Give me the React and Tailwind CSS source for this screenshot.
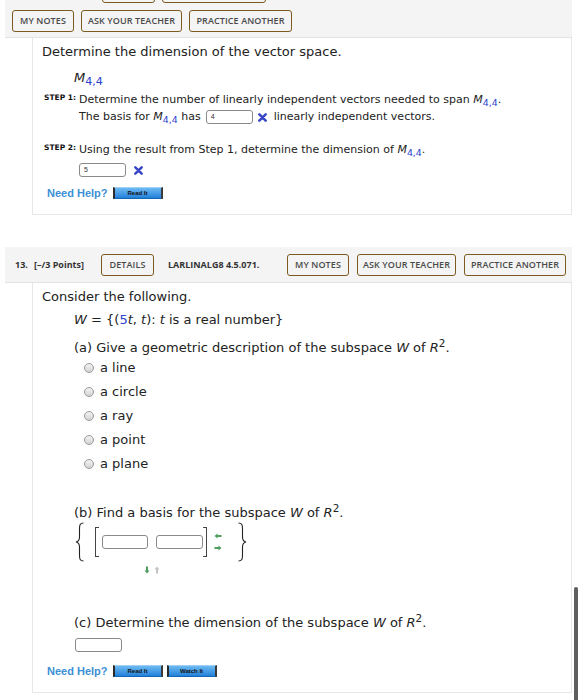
import React from "react";

const Btn = ({ className = "", children }) => (
  <div
    className={
      "h-[22px] flex items-center justify-center rounded-[3px] border-[1.5px] border-[#7d5a1e] text-[9px] font-semibold text-[#4a4a4a] tracking-[0.1px] " +
      className
    }
    style={{ fontFamily: '"Open Sans", sans-serif' }}
  >
    {children}
  </div>
);

const Sub = ({ children }) => (
  <span className="text-[#2b3fcf] text-[0.85em] relative top-[3px]">{children}</span>
);

const M44 = () => (
  <span>
    <i>M</i>
    <Sub>4,4</Sub>
  </span>
);

const R2 = () => (
  <span>
    <i>R</i>
    <span className="text-[0.8em] relative top-[-5px]">2</span>
  </span>
);

const BlueX = () => (
  <svg width="9" height="9" viewBox="0 0 10 10" className="inline-block">
    <path d="M1.5 1.5 L8.5 8.5 M8.5 1.5 L1.5 8.5" stroke="#3a46c8" strokeWidth="2.8" strokeLinecap="round" />
  </svg>
);

const Input = ({ className = "", value = "" }) => (
  <div
    className={
      "h-[14px] border border-[#8a8a8a] rounded-[3px] bg-white flex items-center pl-[4px] text-[7px] text-[#333] " +
      className
    }
    style={{ fontFamily: '"Liberation Sans", sans-serif' }}
  >
    {value}
  </div>
);

const BlueBtn = ({ children }) => (
  <div
    className="w-[50px] h-[12px] flex items-center justify-center border-l-2 border-r-2 border-l-[#2a2a2a] border-r-[#3a3a3a] border-t border-t-[#9fd0f7] border-b border-b-[#1565b5] bg-gradient-to-b from-[#6cbaf3] to-[#1f80d9] text-[6px] font-bold text-[#111]"
    style={{ fontFamily: '"Liberation Sans", sans-serif' }}
  >
    {children}
  </div>
);

const NeedHelp = () => (
  <span
    className="text-[11px] font-bold text-[#3d8fd6] mr-[5px]"
    style={{ fontFamily: '"Liberation Sans", Arial, sans-serif' }}
  >
    Need Help?
  </span>
);

const Radio = ({ label }) => (
  <div className="h-[24px] flex items-center pl-[42px]">
    <div className="w-[10px] h-[10px] rounded-full border border-[#9a9a9a] bg-gradient-to-b from-[#f4f4f4] to-[#d2d2d2]" />
    <span className="ml-[6px]">{label}</span>
  </div>
);

const Step = ({ n, children }) => (
  <div className="flex items-start h-[16px] pl-[2px]">
    <span className="w-[35px] text-[7.5px] font-bold leading-none mt-[2px] text-[#111]">STEP {n}:</span>
    <span className="text-[11px] leading-[16px]">{children}</span>
  </div>
);

export default function App() {
  return (
    <div
      className="w-[583px] h-[700px] bg-white overflow-hidden relative text-[#222]"
      style={{ fontFamily: '"DejaVu Sans", Verdana, sans-serif' }}
    >
      {/* header 1 */}
      <div className="ml-[5px] w-[567px] h-[38px] bg-[#f4f4f4] border-b border-[#e3e3e3] overflow-hidden flex flex-col">
        <div className="flex mt-[-19px] h-[22px] pl-[97px] gap-[7px]">
          <Btn className="w-[53px]" />
          <Btn className="w-[104px]" />
        </div>
        <div className="flex mt-[7px] pl-[7px] gap-[7px]">
          <Btn className="w-[62px]">MY NOTES</Btn>
          <Btn className="w-[101px]">ASK YOUR TEACHER</Btn>
          <Btn className="w-[103px]">PRACTICE ANOTHER</Btn>
        </div>
      </div>

      {/* panel 1 */}
      <div className="ml-[32px] w-[540px] h-[177px] border-l border-r border-b border-[#e6e6e6] pl-[9px] text-[13px] flex flex-col">
        <div className="h-[16px] leading-[16px] mt-[6px]">Determine the dimension of the vector space.</div>
        <div className="h-[16px] leading-[16px] mt-[10px] pl-[32px]">
          <M44 />
        </div>
        <div className="mt-[6px]">
          <Step n={1}>
            Determine the number of linearly independent vectors needed to span <M44 />.
          </Step>
        </div>
        <div className="mt-[1px] h-[16px] flex items-center pl-[37px] text-[11px]">
          <span>
            The basis for <M44 /> has
          </span>
          <Input className="w-[47px] ml-[5px]" value="4" />
          <span className="ml-[5px] flex items-center">
            <BlueX />
          </span>
          <span className="ml-[7px]">linearly independent vectors.</span>
        </div>
        <div className="mt-[17px]">
          <Step n={2}>
            Using the result from Step 1, determine the dimension of <M44 />.
          </Step>
        </div>
        <div className="mt-[4px] h-[16px] flex items-center pl-[37px]">
          <Input className="w-[47px]" value="5" />
          <span className="ml-[8px] flex items-center">
            <BlueX />
          </span>
        </div>
        <div className="mt-[7px] h-[16px] flex items-center pl-[5px]">
          <NeedHelp />
          <BlueBtn>Read It</BlueBtn>
        </div>
      </div>

      {/* header 2 */}
      <div
        className="mt-[32px] ml-[5px] w-[567px] h-[36px] bg-[#f4f4f4] border-b border-[#e3e3e3] flex items-center pl-[10px] text-[9px] font-bold text-[#333]"
        style={{ fontFamily: '"Open Sans", sans-serif' }}
      >
        <span className="w-[19px]">13.</span>
        <span className="w-[67px]">[–/3 Points]</span>
        <Btn className="w-[53px]">DETAILS</Btn>
        <span className="ml-[14px] w-[119px]">LARLINALG8 4.5.071.</span>
        <Btn className="w-[62px]">MY NOTES</Btn>
        <Btn className="w-[99px] ml-[8px]">ASK YOUR TEACHER</Btn>
        <Btn className="w-[102px] ml-[8px]">PRACTICE ANOTHER</Btn>
      </div>

      {/* panel 2 */}
      <div className="ml-[32px] w-[540px] border-l border-r border-b border-[#e6e6e6] pl-[9px] text-[13px] pb-[13px] flex flex-col">
        <div className="h-[16px] leading-[16px] mt-[6px]">Consider the following.</div>
        <div className="h-[16px] leading-[16px] mt-[7px] pl-[32px]">
          <i>W</i> = {"{("}
          <span className="text-[#2b3fcf]">5</span>
          <i>t</i>, <i>t</i>): <i>t</i> is a real number{"}"}
        </div>
        <div className="h-[16px] leading-[16px] mt-[12px] pl-[32px]">
          (a) Give a geometric description of the subspace <i>W</i> of <R2 />.
        </div>
        <div>
          <Radio label="a line" />
          <Radio label="a circle" />
          <Radio label="a ray" />
          <Radio label="a point" />
          <Radio label="a plane" />
        </div>
        <div className="h-[16px] leading-[16px] mt-[29px] pl-[32px]">
          (b) Find a basis for the subspace <i>W</i> of <R2 />.
        </div>
        <div className="mt-[1px] h-[40px] flex items-center pl-[33px]">
          <svg width="10" height="40" viewBox="0 0 10 40">
            <path
              d="M8.5 1 C5 1 4.5 3 4.5 7 L4.5 15 C4.5 18 3.5 19.5 1 20 C3.5 20.5 4.5 22 4.5 25 L4.5 33 C4.5 37 5 39 8.5 39"
              fill="none"
              stroke="#222"
              strokeWidth="1.1"
            />
          </svg>
          <div className="ml-[10px] w-[4px] h-[30px] border-l border-t border-b border-[#444]" />
          <Input className="w-[46px] ml-[3px]" />
          <Input className="w-[47px] ml-[8px]" />
          <div className="w-[4px] h-[30px] border-r border-t border-b border-[#444]" />
          <div className="ml-[7px] flex flex-col gap-[6px]">
            <svg width="8" height="6" viewBox="0 0 8 6">
              <path d="M0.5 3 L3.5 0.5 L3.5 2 L7.5 2 L7.5 4 L3.5 4 L3.5 5.5 Z" fill="#4f9e5f" />
            </svg>
            <svg width="8" height="6" viewBox="0 0 8 6">
              <path d="M7.5 3 L4.5 0.5 L4.5 2 L0.5 2 L0.5 4 L4.5 4 L4.5 5.5 Z" fill="#4f9e5f" />
            </svg>
          </div>
          <svg width="10" height="40" viewBox="0 0 10 40" className="ml-[15px]">
            <path
              d="M1.5 1 C5 1 5.5 3 5.5 7 L5.5 15 C5.5 18 6.5 19.5 9 20 C6.5 20.5 5.5 22 5.5 25 L5.5 33 C5.5 37 5 39 1.5 39"
              fill="none"
              stroke="#222"
              strokeWidth="1.1"
            />
          </svg>
        </div>
        <div className="mt-[3px] h-[10px] flex items-center pl-[102px] gap-[4px]">
          <svg width="6" height="8" viewBox="0 0 6 8">
            <path d="M3 7.5 L0.5 4.5 L2 4.5 L2 0.5 L4 0.5 L4 4.5 L5.5 4.5 Z" fill="#4f9e5f" />
          </svg>
          <svg width="6" height="8" viewBox="0 0 6 8">
            <path d="M3 0.5 L0.5 3.5 L2 3.5 L2 7.5 L4 7.5 L4 3.5 L5.5 3.5 Z" fill="#c4c4c4" />
          </svg>
        </div>
        <div className="h-[16px] leading-[16px] mt-[40px] pl-[32px]">
          (c) Determine the dimension of the subspace <i>W</i> of <R2 />.
        </div>
        <div className="mt-[7px] pl-[33px]">
          <Input className="w-[47px]" />
        </div>
        <div className="mt-[11px] h-[16px] flex items-center pl-[5px]">
          <NeedHelp />
          <BlueBtn>Read It</BlueBtn>
          <div className="ml-[4px]">
            <BlueBtn>Watch It</BlueBtn>
          </div>
        </div>
      </div>

      {/* scrollbar */}
      <div className="absolute left-[574px] top-[587px] w-[4px] h-[120px] rounded-full bg-[#5f5f5f]" />
    </div>
  );
}
